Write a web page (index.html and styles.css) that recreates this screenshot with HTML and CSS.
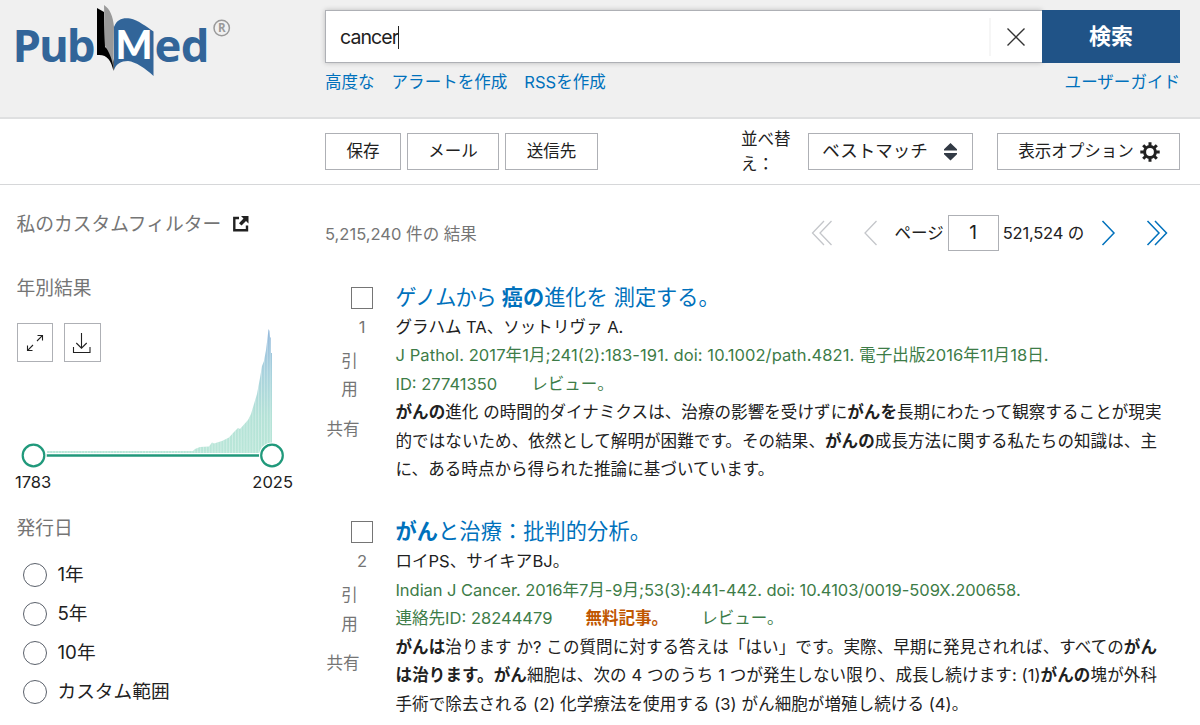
FILE: index.html
```
<!DOCTYPE html>
<html lang="ja">
<head>
<meta charset="utf-8">
<title>cancer - PubMed</title>
<link rel="stylesheet" href="styles.css">
</head>
<body>
<header class="header">
  <a class="logo">
    <svg width="240" height="80" viewBox="0 0 240 80">
      <text class="logo-word" x="12.500" y="62" textLength="83">Pub</text>
      <path fill="#000" d="M97 8 104 12 105 47C110 50 112 54 114 62L113.500 71C111 60 107 54 97 55Z"/>
      <path fill="#999" d="M104 5C110 9 113 16 114 27L113.500 68C112 58 109 52 105 46Z"/>
      <path fill="#326599" d="M114 27C117 19 123 17.500 130 18.500C138 20 147 27 153.500 31.500V76C145 68 136 62 128 61C121 61 116 64 114 70Z"/>
      <text class="logo-m" x="115.500" y="58.800" textLength="37" lengthAdjust="spacingAndGlyphs">M</text>
      <text class="logo-word" x="154.500" y="62" textLength="55">ed</text>
      <circle cx="221.700" cy="28" r="7.700" fill="none" stroke="#999" stroke-width="1.500"/>
      <text class="logo-reg" x="218" y="32.300">R</text>
    </svg>
  </a>
  <div class="search">
    <div class="search-row">
      <div class="field"><span class="query">cancer</span><i class="caret"></i>
        <span class="clear"><svg width="20" height="20" viewBox="0 0 20 20"><path d="M1.500 1.500 18.500 18.500M18.500 1.500 1.500 18.500" fill="none" stroke="#333" stroke-width="1.400"/></svg></span>
      </div>
      <button class="go">検索</button>
    </div>
    <div class="links"><a>高度な</a><a>アラートを作成</a><a>RSSを作成</a><a class="guide">ユーザーガイド</a></div>
  </div>
</header>
<div class="toolbar">
  <button class="btn save">保存</button>
  <button class="btn mail">メール</button>
  <button class="btn send">送信先</button>
  <div class="sort-label">並べ替<br>え：</div>
  <div class="btn select"><span>ベストマッチ</span><svg width="13" height="18" viewBox="0 0 13 18"><path d="M6.500 0 13 6.200V7.500H0V6.200ZM0 10H13V11.300L6.500 17.500 0 11.300Z" fill="#323a45"/></svg></div>
  <button class="btn options"><span>表示オプション</span><svg width="20" height="20" viewBox="-10 -10 20 20"><circle r="5.400" fill="none" stroke="#212121" stroke-width="3"/><path stroke="#212121" stroke-width="3" d="M0-9.700V-6M0 9.700V6M-9.700 0H-6M9.700 0H6M-6.800-6.800-4.500-4.500M6.800 6.800 4.500 4.500M-6.800 6.800-4.500 4.500M6.800-6.800 4.500-4.500"/></svg></button>
</div>
<div class="main">
  <aside class="side">
    <h3 class="filters"><span>私のカスタムフィルター</span><svg width="16" height="16" viewBox="0 0 16 16"><path d="M6 2H1.300V14.200H14V9.500" fill="none" stroke="#212121" stroke-width="2.400"/><path d="M8 0H15.500V7.500L13 5 8.500 9.500 6 7.200 10.500 2.600Z" fill="#212121"/></svg></h3>
    <h3 class="by-year">年別結果</h3>
    <div class="timeline">
      <div class="tools">
        <span class="tool"><svg width="18" height="18" viewBox="0 0 18 18"><path d="M11 7 16.300 1.700M11.500 1.500H16.500V6.500M7 11 1.700 16.300M1.500 11.500V16.500H6.500" fill="none" stroke="#212121" stroke-width="1.100"/></svg></span>
        <span class="tool"><svg width="20" height="22" viewBox="0 0 20 22"><path d="M9.500 1V16M4.300 11 9.500 16.200 14.700 11M1.500 15V20.500H18V15" fill="none" stroke="#212121" stroke-width="1.100"/></svg></span>
      </div>
      <svg class="chart" width="300" height="150" viewBox="0 320 300 150">
        <defs>
          <linearGradient id="bars" x1="0" y1="329" x2="0" y2="453" gradientUnits="userSpaceOnUse"><stop offset="0" stop-color="#94b9dc"/><stop offset=".35" stop-color="#a8d2dd"/><stop offset=".7" stop-color="#b4e2d7"/><stop offset="1" stop-color="#b9e6d8"/></linearGradient>
          <pattern id="stripes" width="2.900" height="10" patternUnits="userSpaceOnUse"><path d="M.5 0V10" stroke="#fff" stroke-width=".6" opacity=".55"/></pattern>
          <path id="area" d="M47 453V451H193L195 449 200 447 209 446.500 212 442.500 214 443.500 222 441 229 437.500 234 432 238 428 240 429 248 420 251 414 254 404 257 394 260 378 262 366 264 361 266 350 267.500 338 268.500 329 269.500 331 270 337 271 338 271 353H272V453Z"/>
        </defs>
        <use href="#area" fill="url(#bars)"/>
        <use href="#area" fill="url(#stripes)"/>
        <path d="M46.500 455.500H260" stroke="#20997b" stroke-width="2.600"/>
        <circle cx="33.500" cy="455.500" r="13" fill="#fff"/><circle cx="272" cy="455.500" r="13" fill="#fff"/>
        <circle cx="33.500" cy="455.500" r="10.800" fill="#fff" stroke="#20997b" stroke-width="2.200"/>
        <circle cx="272" cy="455.500" r="10.800" fill="#fff" stroke="#20997b" stroke-width="2.200"/>
      </svg>
    </div>
    <div class="years"><span>1783</span><span>2025</span></div>
    <h3 class="pubdate">発行日</h3>
    <ul class="radios">
      <li><i></i><span>1年</span></li><li><i></i><span>5年</span></li><li><i></i><span>10年</span></li><li><i></i><span>カスタム範囲</span></li>
    </ul>
  </aside>
  <main class="results">
    <div class="top">
      <div class="count">5,215,240 件の 結果</div>
      <div class="pager">
        <svg class="first" width="22" height="26" viewBox="0 0 22 26"><path d="M13 1 1.500 13 13 25M20.500 1 9 13 20.500 25" fill="none" stroke="#c4c6ca" stroke-width="1.300"/></svg>
        <svg class="prev" width="15" height="26" viewBox="0 0 15 26"><path d="M13.500 1 2 13 13.500 25" fill="none" stroke="#c4c6ca" stroke-width="1.300"/></svg>
        <span class="page">ページ</span><span class="num">1</span><span class="of">521,524 の</span>
        <svg class="next" width="15" height="26" viewBox="0 0 15 26"><path d="M1.500 1 13 13 1.500 25" fill="none" stroke="#0071bc" stroke-width="1.500"/></svg>
        <svg class="last" width="22" height="26" viewBox="0 0 22 26"><path d="M1.500 1 13 13 1.500 25M9 1 20.500 13 9 25" fill="none" stroke="#0071bc" stroke-width="1.500"/></svg>
      </div>
    </div>
    <article class="result">
      <div class="actions"><i class="check"></i><span class="rank">1</span><span class="cite">引<br>用</span><span class="share">共有</span></div>
      <div class="body">
        <h2 class="title"><span class="lead">ゲノムから</span> <b>癌の</b>進化を 測定する。</h2>
        <div class="line">グラハム TA、ソットリヴァ A.</div>
        <div class="line green c1">J Pathol. 2017年1月;241(2):183-191. doi: 10.1002/path.4821. 電子出版2016年11月18日.</div>
        <div class="line green ids1"><span>ID: 27741350</span><span>レビュー。</span></div>
        <div class="line s1"><b>がんの</b>進化 の時間的ダイナミクスは、治療の影響を受けずに<b>がんを</b>長期にわたって観察することが現実</div>
        <div class="line s2">的ではないため、依然として解明が困難です。その結果、<b>がんの</b>成長方法に関する私たちの知識は、主</div>
        <div class="line s3">に、ある時点から得られた推論に基づいています。</div>
      </div>
    </article>
    <article class="result">
      <div class="actions"><i class="check"></i><span class="rank">2</span><span class="cite">引<br>用</span><span class="share">共有</span></div>
      <div class="body">
        <h2 class="title t2"><b>がん</b>と治療：批判的分析。</h2>
        <div class="line">ロイPS、サイキアBJ。</div>
        <div class="line green c2">Indian J Cancer. 2016年7月-9月;53(3):441-442. doi: 10.4103/0019-509X.200658.</div>
        <div class="line green ids2"><span>連絡先ID: 28244479</span><b class="free">無料記事。</b><span>レビュー。</span></div>
        <div class="line s4"><b>がんは</b>治ります か? この質問に対する答えは「はい」です。実際、早期に発見されれば、すべての<b>がん</b></div>
        <div class="line s5"><b>は治ります。がん</b>細胞は、次の 4 つのうち 1 つが発生しない限り、成長し続けます: (1)<b>がんの</b>塊が外科</div>
        <div class="line s6">手術で除去される (2) 化学療法を使用する (3) がん細胞が増殖し続ける (4)。</div>
      </div>
    </article>
  </main>
</div>
</body>
</html>
```
FILE: styles.css
```
* { box-sizing: border-box; }
body {
  margin: 0; width: 1200px; height: 725px; overflow: hidden; background: #fff; color: #212121;
  font: 16.55px/28.5px Inter, "Noto Sans CJK JP", sans-serif; white-space: nowrap;
}
h2, h3, ul { margin: 0; padding: 0; font-weight: 400; list-style: none; }
button { font: inherit; color: inherit; padding: 0; }
svg { display: block; flex: none; }

.header { display: flex; height: 119px; background: #f0f0f0; border-bottom: 2px solid #dfe0e1; }
.logo { width: 325px; }
.logo-word { font: 700 45.5px "Open Sans", sans-serif; fill: #326599; }
.logo-m { font: 900 39px Lato, sans-serif; fill: #fff; }
.logo-reg { font: 700 11.5px "Open Sans", sans-serif; fill: #999; }
.search { width: 855px; padding-top: 10px; }
.search-row { display: flex; height: 53px; }
.field {
  display: flex; align-items: center; width: 717px; padding-left: 14px; background: #fff;
  border: 1.5px solid #aeb0b5; border-right: 0; box-shadow: 0 0 5px rgba(0,0,0,.22);
}
.query { font-size: 19.5px; letter-spacing: -.9px; padding-top: 2px; }
.caret { width: 1px; height: 23px; background: #212121; margin-top: 1px; }
.clear {
  display: flex; align-items: center; justify-content: center; width: 53px; height: 38px; padding-right: 2px;
  margin-left: auto; border-left: 2px solid #f6f6f6;
}
.go { width: 138px; border: 0; background: #205387; color: #fff; font-weight: 700; font-size: 22px; position: relative; }
.links { display: flex; gap: 17px; color: #0071bc; height: 38px; align-items: center; }
.guide { margin-left: auto; }

.toolbar { display: flex; align-items: center; height: 66px; padding-left: 325px; border-bottom: 1px solid #d6d7d9; }
.btn { height: 37px; border: 1.5px solid #aeb0b5; background: #fff; display: flex; align-items: center; justify-content: center; }
.save { width: 76px; margin-right: 6px; }
.mail { width: 92px; margin-right: 6px; }
.send { width: 93px; }
.sort-label { width: 67px; margin-left: 143px; line-height: 24.5px; }
.select { width: 165px; gap: 16px; font-size: 17.5px; padding-right: 2px; }
.options { width: 183px; margin-left: 24px; gap: 6px; padding-left: 1px; }

.main { display: flex; }
.side { width: 325px; padding-left: 16.5px; color: #212121; }
.side h3 { font-size: 18.75px; color: #757575; height: 28px; line-height: 29px; }
.filters { display: flex; align-items: center; gap: 12px; margin-top: 25px; }
.side .by-year { margin-top: 36px; }
.timeline { display: grid; width: 300px; height: 150px; margin: 18px 0 0 -16.5px; }
.timeline > * { grid-area: 1 / 1; }
.tools { display: flex; gap: 11px; padding: 3px 0 0 16.5px; }
.tool { display: flex; align-items: center; justify-content: center; width: 36.5px; height: 39px; border: 1px solid #aeb0b5; }
.years { display: flex; justify-content: space-between; width: 278px; margin-left: -1.5px; height: 24px; line-height: 24px; }
.side .pubdate { margin-top: 20px; }
.radios { margin-top: 13px; }
.radios li { display: flex; align-items: center; height: 39px; gap: 10.5px; padding-left: 6.5px; font-size: 18.7px; }
.radios span { padding-top: 1.5px; }
.radios i { width: 24px; height: 24px; border: 1.2px solid #5b616b; border-radius: 50%; }

.results { width: 875px; }
.top { display: flex; height: 98.5px; padding-top: 30px; align-items: flex-start; justify-content: space-between; }
.count { color: #757575; padding-top: 5px; }
.pager { display: flex; align-items: center; height: 36px; margin-right: 32px; }
.prev { margin-left: 30px; }
.page { margin-left: 16px; }
.num { width: 51px; height: 36px; margin: 0 4px; border: 1.5px solid #aeb0b5; text-align: center; line-height: 34px; font-size: 19px; }
.next { margin-left: 17px; }
.last { margin-left: 30px; }
.of { letter-spacing: -.2px; }

.result { display: flex; height: 234.5px; }
.actions { display: flex; flex-direction: column; width: 70.5px; color: #757575; }
.check { width: 22px; height: 22px; margin: 3px 0 0 26px; border: 1.5px solid #757575; }
.rank { width: 74px; text-align: center; height: 28px; margin-top: 4px; }
.cite { width: 49px; text-align: center; margin-top: 6px; }
.share { padding-left: 1.5px; margin-top: 11px; }
.body { width: 790px; }
.title { font-size: 21.2px; height: 29px; line-height: 27px; color: #0071bc; }
.lead { letter-spacing: -1px; }
.t2 { letter-spacing: .1px; }
.line { height: 28.5px; }
.green { color: #3d7c47; }
.c1 { letter-spacing: .075px; }
.c2 { letter-spacing: -.065px; }
.s1, .s3 { letter-spacing: .055px; }
.s2, .s4, .s6 { letter-spacing: .07px; }
.s5 { letter-spacing: .1px; }
.free { color: #c05600; }
.ids1 { display: flex; gap: 34px; }
.ids2 { display: flex; gap: 33px; }
```
